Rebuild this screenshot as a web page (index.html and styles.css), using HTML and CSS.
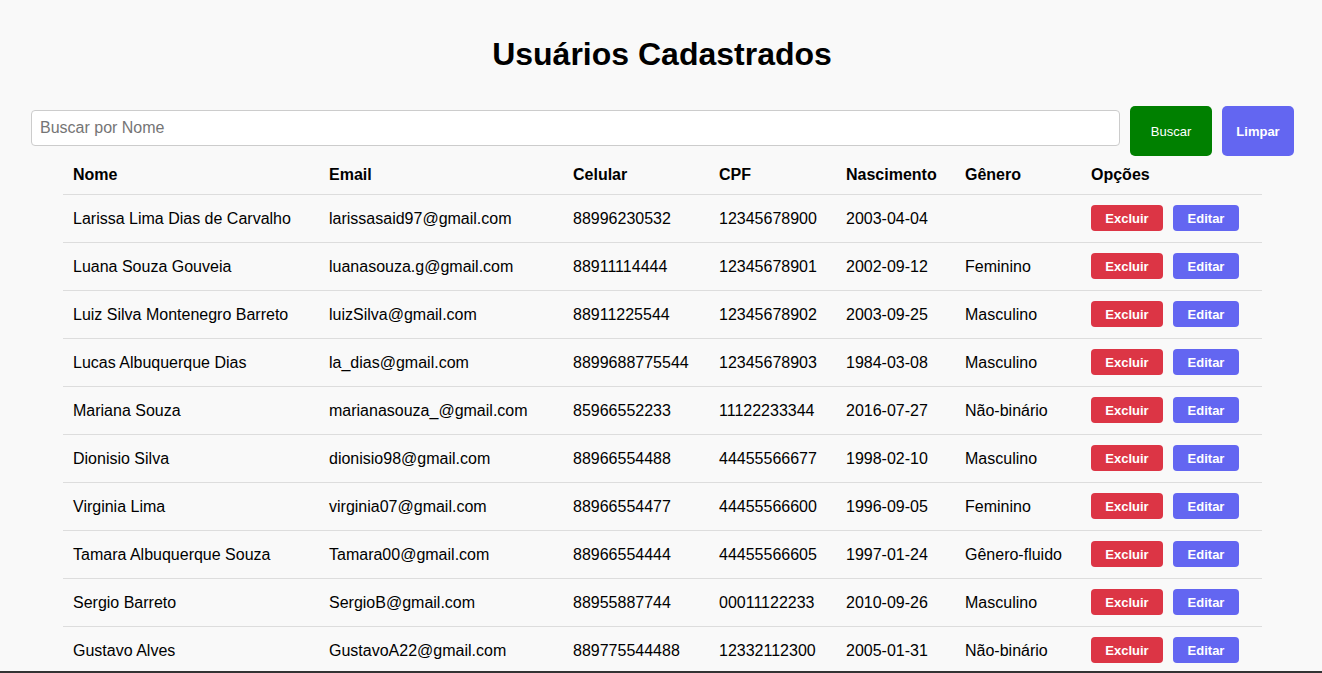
FILE: index.html
```html
<!DOCTYPE html>
<html lang="pt-BR">
<head>
<meta charset="utf-8">
<title>Usuários Cadastrados</title>
<link rel="stylesheet" href="styles.css">
</head>
<body>
<main class="page">
  <h1 class="title">Usuários Cadastrados</h1>
  <form class="search">
    <input class="search-input" type="text" placeholder="Buscar por Nome">
    <button type="button" class="btn-buscar">Buscar</button>
    <button type="button" class="btn-limpar">Limpar</button>
  </form>
  <table class="users">
    <thead>
      <tr>
        <th class="c-nome">Nome</th>
        <th class="c-email">Email</th>
        <th class="c-cel">Celular</th>
        <th class="c-cpf">CPF</th>
        <th class="c-nasc">Nascimento</th>
        <th class="c-gen">Gênero</th>
        <th class="c-opt">Opções</th>
      </tr>
    </thead>
    <tbody>
      <tr><td>Larissa Lima Dias de Carvalho</td><td>larissasaid97@gmail.com</td><td>88996230532</td><td>12345678900</td><td>2003-04-04</td><td></td><td><div class="actions"><button class="btn-del">Excluir</button><button class="btn-edit">Editar</button></div></td></tr>
      <tr><td>Luana Souza Gouveia</td><td>luanasouza.g@gmail.com</td><td>88911114444</td><td>12345678901</td><td>2002-09-12</td><td>Feminino</td><td><div class="actions"><button class="btn-del">Excluir</button><button class="btn-edit">Editar</button></div></td></tr>
      <tr><td>Luiz Silva Montenegro Barreto</td><td>luizSilva@gmail.com</td><td>88911225544</td><td>12345678902</td><td>2003-09-25</td><td>Masculino</td><td><div class="actions"><button class="btn-del">Excluir</button><button class="btn-edit">Editar</button></div></td></tr>
      <tr><td>Lucas Albuquerque Dias</td><td>la_dias@gmail.com</td><td>8899688775544</td><td>12345678903</td><td>1984-03-08</td><td>Masculino</td><td><div class="actions"><button class="btn-del">Excluir</button><button class="btn-edit">Editar</button></div></td></tr>
      <tr><td>Mariana Souza</td><td>marianasouza_@gmail.com</td><td>85966552233</td><td>11122233344</td><td>2016-07-27</td><td>Não-binário</td><td><div class="actions"><button class="btn-del">Excluir</button><button class="btn-edit">Editar</button></div></td></tr>
      <tr><td>Dionisio Silva</td><td>dionisio98@gmail.com</td><td>88966554488</td><td>44455566677</td><td>1998-02-10</td><td>Masculino</td><td><div class="actions"><button class="btn-del">Excluir</button><button class="btn-edit">Editar</button></div></td></tr>
      <tr><td>Virginia Lima</td><td>virginia07@gmail.com</td><td>88966554477</td><td>44455566600</td><td>1996-09-05</td><td>Feminino</td><td><div class="actions"><button class="btn-del">Excluir</button><button class="btn-edit">Editar</button></div></td></tr>
      <tr><td>Tamara Albuquerque Souza</td><td>Tamara00@gmail.com</td><td>88966554444</td><td>44455566605</td><td>1997-01-24</td><td>Gênero-fluido</td><td><div class="actions"><button class="btn-del">Excluir</button><button class="btn-edit">Editar</button></div></td></tr>
      <tr><td>Sergio Barreto</td><td>SergioB@gmail.com</td><td>88955887744</td><td>00011122233</td><td>2010-09-26</td><td>Masculino</td><td><div class="actions"><button class="btn-del">Excluir</button><button class="btn-edit">Editar</button></div></td></tr>
      <tr><td>Gustavo Alves</td><td>GustavoA22@gmail.com</td><td>889775544488</td><td>12332112300</td><td>2005-01-31</td><td>Não-binário</td><td><div class="actions"><button class="btn-del">Excluir</button><button class="btn-edit">Editar</button></div></td></tr>
    </tbody>
  </table>
</main>
<div class="frame-edge"></div>
</body>
</html>
```

FILE: styles.css
```css
* { box-sizing: border-box; }
html, body {
  margin: 0;
  padding: 0;
  background: #f9f9f9;
  color: #000;
  font-family: "Liberation Sans", Arial, sans-serif;
  font-size: 16px;
}
.page {
  padding-top: 36px;
}
.title {
  margin: 0 0 33px;
  padding-left: 2px;
  font-size: 32px;
  line-height: 37px;
  font-weight: bold;
  text-align: center;
}
.search {
  display: flex;
  align-items: flex-start;
  gap: 10px;
  padding: 0 28px 0 31px;
  margin: 0;
}
.search-input {
  flex: 1;
  height: 36px;
  margin-top: 4px;
  padding: 0 8px;
  border: 1px solid #ccc;
  border-radius: 4px;
  background: #fff;
  font-family: "Liberation Sans", Arial, sans-serif;
  font-size: 16px;
  color: #000;
}
.search-input::placeholder { color: #757575; }
.btn-buscar, .btn-limpar {
  height: 50px;
  border: none;
  border-radius: 5px;
  color: #fff;
  font-family: "Liberation Sans", Arial, sans-serif;
  font-size: 13px;
  padding: 0;
}
.btn-buscar {
  width: 82px;
  background: #008000;
  font-weight: normal;
}
.btn-limpar {
  width: 72px;
  background: #6366f1;
  font-weight: bold;
}
.users {
  width: 1199px;
  margin: 0 0 0 63px;
  border-collapse: collapse;
  table-layout: fixed;
}
.users th {
  text-align: left;
  font-weight: bold;
  padding: 10px 10px;
  line-height: 18px;
  border-bottom: 1px solid #ddd;
}
.users td {
  padding: 0 10px;
  height: 48px;
  line-height: 20px;
  border-bottom: 1px solid #ddd;
  vertical-align: middle;
  white-space: nowrap;
}
.c-nome { width: 256px; }
.c-email { width: 244px; }
.c-cel { width: 146px; }
.c-cpf { width: 127px; }
.c-nasc { width: 119px; }
.c-gen { width: 126px; }
.c-opt { width: 181px; }
.actions {
  display: flex;
  gap: 10px;
  margin-top: -1px;
}
.btn-del, .btn-edit {
  height: 26px;
  border: none;
  border-radius: 4px;
  color: #fff;
  font-family: "Liberation Sans", Arial, sans-serif;
  font-size: 13px;
  font-weight: bold;
  padding: 0;
}
.btn-del {
  width: 72px;
  background: #dc3545;
}
.btn-edit {
  width: 66px;
  background: #6366f1;
}
.frame-edge {
  position: fixed;
  left: 0;
  right: 0;
  bottom: 0;
  height: 2px;
  background: #333;
}
```
